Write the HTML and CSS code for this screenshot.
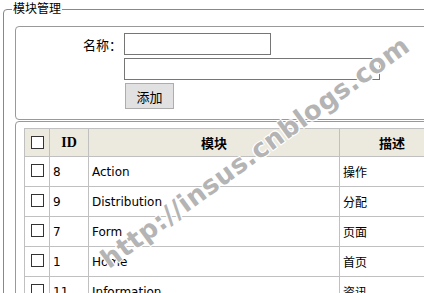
FILE: index.html
```html
<!DOCTYPE html>
<html lang="zh-CN">
<head>
    <meta charset="UTF-8">
    <meta name="viewport" content="width=device-width, initial-scale=1.0">
    <title>模块管理</title>
    <link rel="stylesheet" href="styles.css">
</head>
<body>

    <fieldset class="module-box">
        <legend>模块管理</legend>

        <div class="panel form-panel">
            <div class="form-grid">
                <label for="moduleName">名称：</label>
                <input type="text" id="moduleName" class="name-input">
                <span></span>
                <input type="text" id="moduleDesc" class="desc-input">
                <span></span>
                <div><button type="button">添加</button></div>
            </div>
        </div>

        <div class="panel table-panel">
            <table class="module-table">
                <colgroup>
                    <col class="col-check">
                    <col class="col-id">
                    <col class="col-name">
                    <col>
                </colgroup>
                <thead>
                    <tr>
                        <th><input type="checkbox"></th>
                        <th class="id-head">ID</th>
                        <th>模块</th>
                        <th>描述</th>
                    </tr>
                </thead>
                <tbody>
                    <tr><td class="check"><input type="checkbox"></td><td>8</td><td>Action</td><td>操作</td></tr>
                    <tr><td class="check"><input type="checkbox"></td><td>9</td><td>Distribution</td><td>分配</td></tr>
                    <tr><td class="check"><input type="checkbox"></td><td>7</td><td>Form</td><td>页面</td></tr>
                    <tr><td class="check"><input type="checkbox"></td><td>1</td><td>Home</td><td>首页</td></tr>
                    <tr><td class="check"><input type="checkbox"></td><td>11</td><td>Information</td><td>资讯</td></tr>
                </tbody>
            </table>
        </div>
    </fieldset>

    <div class="watermark">http://insus.cnblogs.com</div>

</body>
</html>
```

FILE: styles.css
```css
html {
    overflow: hidden;
}

body {
    margin: 0;
    padding: 0;
    font-family: "DejaVu Sans", "Noto Sans CJK SC", sans-serif;
    font-size: 12px;
    color: #000;
    background-color: #fff;
    width: 470px;
}

.module-box {
    box-sizing: border-box;
    width: 463px;
    margin: 2px 0 0 3px;
    padding: 0 11px 10px 11px;
    border: 1px solid #888;
    border-radius: 4px;
}

.module-box legend {
    margin-left: -3px;
    padding: 0 1px;
    font-size: 12px;
    line-height: 15px;
}

.panel {
    border: 1px solid #999;
    border-radius: 4px;
}

.form-panel {
    margin-top: 9px;
    padding-top: 6px;
    height: 86px;
}

.form-grid {
    display: grid;
    grid-template-columns: 108px auto;
    row-gap: 3px;
    align-items: center;
}

.form-grid label {
    text-align: right;
    padding-right: 2px;
    font-family: "DejaVu Sans", "Noto Sans CJK JP", sans-serif;
    font-size: 13px;
}

.form-grid input {
    box-sizing: border-box;
    height: 22px;
    margin: 0;
    border: 1px solid #767676;
    padding: 1px 3px;
    font-family: inherit;
}

.name-input {
    width: 147px;
}

.desc-input {
    width: 256px;
}

.form-grid button {
    margin-left: 1px;
    height: 26px;
    width: 49px;
    padding: 0;
    border: 1px solid #adadad;
    background-color: #e1e1e1;
    font-family: inherit;
    font-size: 13px;
    color: #000;
}

.table-panel {
    margin-top: 1px;
    padding: 6px 8px 8px 8px;
}

.module-table {
    width: 100%;
    border-collapse: collapse;
    table-layout: fixed;
    border: 1px solid #c0c0c0;
}

.col-check {
    width: 25px;
}

.col-id {
    width: 39px;
}

.col-name {
    width: 251px;
}

.module-table th,
.module-table td {
    border: 1px solid #c0c0c0;
    padding: 0 3px;
    text-align: left;
}

.module-table th {
    height: 27px;
    background-color: #ece9de;
    text-align: center;
    font-family: "Liberation Serif", "Noto Sans CJK SC", serif;
    font-size: 13px;
    font-weight: bold;
}

.module-table th.id-head {
    font-size: 14px;
}

.module-table td {
    height: 29px;
}

.module-table th:first-child,
.module-table td.check {
    text-align: center;
    padding: 0;
}

.module-table input[type="checkbox"] {
    -webkit-appearance: none;
    appearance: none;
    display: inline-block;
    width: 13px;
    height: 13px;
    margin: 0 0 2px 1px;
    border: 1px solid #333;
    background-color: #fff;
    vertical-align: middle;
}

.watermark {
    position: absolute;
    left: 255px;
    top: 152px;
    transform: translate(-50%, -50%) rotate(-36deg);
    white-space: nowrap;
    font-family: "DejaVu Sans", sans-serif;
    font-size: 26px;
    font-weight: bold;
    letter-spacing: 0.5px;
    color: #b4b4b4;
    text-shadow: 1px 1px 0 #fff, -1px -1px 0 #fff, 1px -1px 0 #fff, -1px 1px 0 #fff;
    pointer-events: none;
}
```
